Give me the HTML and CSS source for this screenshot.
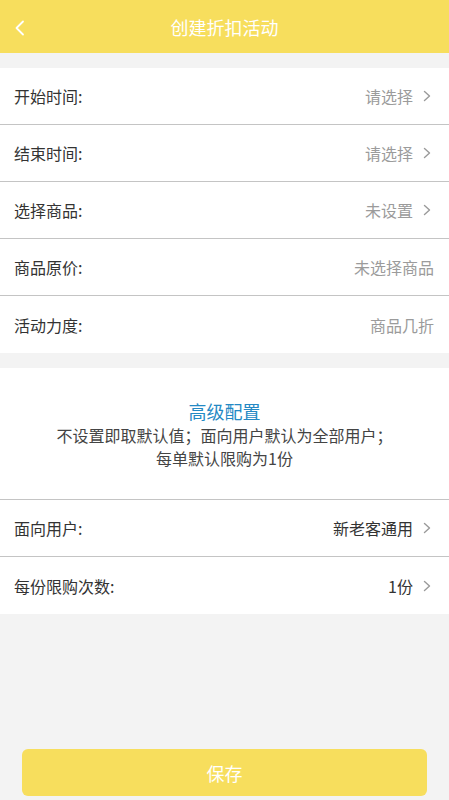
FILE: index.html
```html
<!DOCTYPE html>
<html lang="zh-CN">
<head>
<meta charset="utf-8">
<title>创建折扣活动</title>
<link rel="stylesheet" href="styles.css">
</head>
<body>
<div class="page">
  <header class="topbar">
    <svg class="back" width="12" height="16" viewBox="0 0 12 16"><path d="M9 1.5 L2.5 8 L9 14.5" fill="none" stroke="#fff" stroke-width="1.8" stroke-linecap="round" stroke-linejoin="round"/></svg>
    <h1 class="title">创建折扣活动</h1>
  </header>

  <section class="group first">
    <div class="row"><span class="label">开始时间:</span><span class="value">请选择<svg class="arrow" width="8" height="12" viewBox="0 0 8 12"><path d="M1.5 1.5 L6.5 6 L1.5 10.5" fill="none" stroke="#9a9a9a" stroke-width="1.4" stroke-linecap="round" stroke-linejoin="round"/></svg></span></div>
    <div class="row"><span class="label">结束时间:</span><span class="value">请选择<svg class="arrow" width="8" height="12" viewBox="0 0 8 12"><path d="M1.5 1.5 L6.5 6 L1.5 10.5" fill="none" stroke="#9a9a9a" stroke-width="1.4" stroke-linecap="round" stroke-linejoin="round"/></svg></span></div>
    <div class="row"><span class="label">选择商品:</span><span class="value">未设置<svg class="arrow" width="8" height="12" viewBox="0 0 8 12"><path d="M1.5 1.5 L6.5 6 L1.5 10.5" fill="none" stroke="#9a9a9a" stroke-width="1.4" stroke-linecap="round" stroke-linejoin="round"/></svg></span></div>
    <div class="row"><span class="label">商品原价:</span><span class="value">未选择商品</span></div>
    <div class="row"><span class="label">活动力度:</span><span class="value">商品几折</span></div>
  </section>

  <section class="advanced">
    <div class="adv-title">高级配置</div>
    <p class="adv-desc">不设置即取默认值；面向用户默认为全部用户；</p>
    <p class="adv-desc">每单默认限购为1份</p>
  </section>

  <section class="group">
    <div class="row"><span class="label">面向用户:</span><span class="value dark">新老客通用<svg class="arrow" width="8" height="12" viewBox="0 0 8 12"><path d="M1.5 1.5 L6.5 6 L1.5 10.5" fill="none" stroke="#9a9a9a" stroke-width="1.4" stroke-linecap="round" stroke-linejoin="round"/></svg></span></div>
    <div class="row"><span class="label">每份限购次数:</span><span class="value dark">1份<svg class="arrow" width="8" height="12" viewBox="0 0 8 12"><path d="M1.5 1.5 L6.5 6 L1.5 10.5" fill="none" stroke="#9a9a9a" stroke-width="1.4" stroke-linecap="round" stroke-linejoin="round"/></svg></span></div>
  </section>

  <button class="save">保存</button>
</div>
</body>
</html>
```

FILE: styles.css
```css
* { box-sizing: border-box; }
html, body { margin: 0; padding: 0; }
body {
  background: #f3f3f3;
  font-family: "Noto Sans CJK SC", "Noto Sans", sans-serif;
  color: #333;
}
.page {
  min-height: 800px;
  display: flex;
  flex-direction: column;
}
.topbar {
  height: 53px;
  background: #f7de5d;
  display: flex;
  align-items: center;
  justify-content: center;
  position: relative;
}
.back {
  position: absolute;
  left: 14px;
  top: 20px;
}
.title {
  margin: 0;
  font-size: 18px;
  font-weight: normal;
  color: #fff;
}
.group {
  background: #fff;
}
.group.first {
  margin-top: 15px;
}
.row {
  height: 57px;
  display: flex;
  align-items: center;
  justify-content: space-between;
  padding: 0 15px 0 14px;
  border-bottom: 1px solid #c4c4c4;
}
.row:last-child { border-bottom: none; }
.label {
  font-size: 16px;
  color: #333;
}
.value {
  font-size: 16px;
  color: #9b9b9b;
  display: flex;
  align-items: center;
}
.value.dark { color: #333; }
.arrow {
  margin-left: 10px;
  margin-right: 3px;
}
.advanced {
  margin-top: 15px;
  background: #fff;
  padding: 30px 0 29px;
  text-align: center;
  border-bottom: 1px solid #c4c4c4;
}
.adv-title {
  font-size: 18px;
  line-height: 26px;
  color: #2489c4;
}
.adv-desc {
  margin: 0;
  font-size: 16px;
  line-height: 23px;
  color: #444;
}
.save {
  margin: auto 22px 4px;
  height: 47px;
  border: none;
  border-radius: 6px;
  background: #f7de5d;
  color: #fff;
  font-family: "Noto Sans CJK SC", "Noto Sans", sans-serif;
  font-size: 18px;
}
```
